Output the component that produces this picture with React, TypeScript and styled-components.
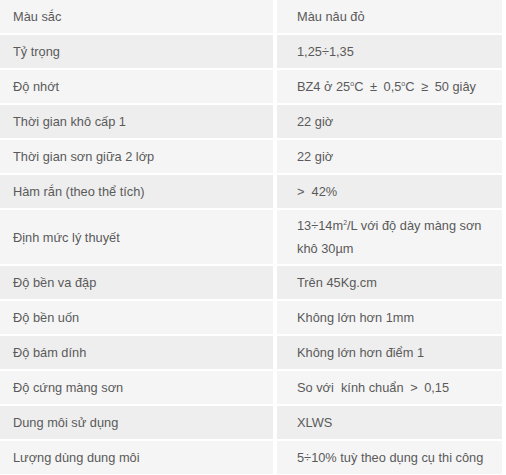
import React from 'react';
import styled, { createGlobalStyle } from 'styled-components';

const GlobalStyle = createGlobalStyle`
  html, body {
    margin: 0;
    padding: 0;
    background: #ffffff;
  }
`;

const Table = styled.div`
  display: grid;
  grid-template-columns: 273px 225px;
  column-gap: 4px;
  row-gap: 2px;
  width: 506px;
  background: #ffffff;
  font-family: 'Liberation Sans', Arial, sans-serif;
  font-size: 12.8px;
  color: #5a5a5a;
`;

const Cell = styled.div<{ shade: boolean; tall?: boolean; right?: boolean }>`
  display: flex;
  align-items: center;
  height: ${p => (p.tall ? '54px' : '33px')};
  padding-left: ${p => (p.right ? '20px' : '13px')};
  background: ${p => (p.shade ? '#eeeeee' : '#f5f5f5')};
  line-height: 23px;
  white-space: nowrap;
  box-sizing: border-box;
`;

const Sup = styled.sup`
  font-size: 7px;
  vertical-align: 5px;
  line-height: 0;
`;

const Sym = styled.span`
  padding: 0 3px;
`;

const rows: { label: React.ReactNode; value: React.ReactNode; tall?: boolean }[] = [
  { label: 'Màu sắc', value: 'Màu nâu đỏ' },
  { label: 'Tỷ trọng', value: '1,25÷1,35' },
  {
    label: 'Độ nhớt',
    value: (
      <span>
        BZ4 ở 25<Sup>o</Sup>C <Sym>±</Sym> 0,5<Sup>o</Sup>C <Sym>≥</Sym> 50 giây
      </span>
    ),
  },
  { label: 'Thời gian khô cấp 1', value: '22 giờ' },
  { label: 'Thời gian sơn giữa 2 lớp', value: '22 giờ' },
  { label: 'Hàm rắn (theo thể tích)', value: <span>&gt;&nbsp; 42%</span> },
  {
    label: 'Định mức lý thuyết',
    value: (
      <span>
        13÷14m<Sup>2</Sup>/L với độ dày màng sơn
        <br />
        khô 30µm
      </span>
    ),
    tall: true,
  },
  { label: 'Độ bền va đập', value: 'Trên 45Kg.cm' },
  { label: 'Độ bền uốn', value: 'Không lớn hơn 1mm' },
  { label: 'Độ bám dính', value: 'Không lớn hơn điểm 1' },
  { label: 'Độ cứng màng sơn', value: <span>So với&nbsp; kính chuẩn <Sym>&gt;</Sym> 0,15</span> },
  { label: 'Dung môi sử dụng', value: 'XLWS' },
  { label: 'Lượng dùng dung môi', value: '5÷10% tuỳ theo dụng cụ thi công' },
];

const App: React.FC = () => (
  <>
    <GlobalStyle />
    <Table>
      {rows.map((r, i) => (
        <React.Fragment key={i}>
          <Cell shade={i % 2 === 1} tall={r.tall}>{r.label}</Cell>
          <Cell shade={i % 2 === 1} tall={r.tall} right>{r.value}</Cell>
        </React.Fragment>
      ))}
    </Table>
  </>
);

export default App;
